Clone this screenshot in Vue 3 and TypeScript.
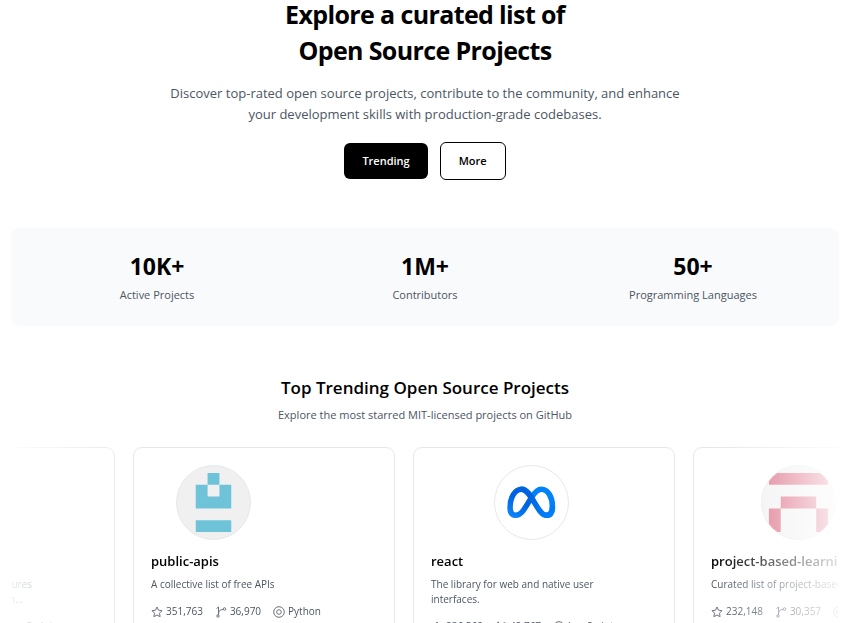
<script setup lang="ts">
interface Stat {
  value: string
  label: string
}

interface Project {
  name: string
  lines: string[]
  stars: string
  forks: string
  language: string
  avatar: 'none' | 'blocks' | 'loop' | 'arch'
  introWidth: number
  alignEnd?: boolean
}

const stats: Stat[] = [
  { value: '10K+', label: 'Active Projects' },
  { value: '1M+', label: 'Contributors' },
  { value: '50+', label: 'Programming Languages' },
]

const projects: Project[] = [
  {
    name: '', lines: ['structures', 'm…'], stars: '', forks: '',
    language: 'JavaScript', avatar: 'none', introWidth: 161, alignEnd: true,
  },
  {
    name: 'public-apis', lines: ['A collective list of free APIs'], stars: '351,763', forks: '36,970',
    language: 'Python', avatar: 'blocks', introWidth: 125,
  },
  {
    name: 'react', lines: ['The library for web and native user', 'interfaces.'], stars: '236,562', forks: '48,767',
    language: 'JavaScript', avatar: 'loop', introWidth: 201,
  },
  {
    name: 'project-based-learning', lines: ['Curated list of project-based tutorials'], stars: '232,148', forks: '30,357',
    language: 'Python', avatar: 'arch', introWidth: 174,
  },
]
</script>

<template>
  <main class="page">
    <section class="hero">
      <h1>Explore a curated list of<br />Open Source Projects</h1>
      <p>Discover top-rated open source projects, contribute to the community, and enhance<br />your development skills with production-grade codebases.</p>
      <div class="actions">
        <button type="button" class="btn btn-solid">Trending</button>
        <button type="button" class="btn btn-outline">More</button>
      </div>
    </section>

    <section class="stats">
      <div v-for="stat in stats" :key="stat.label" class="stat">
        <strong>{{ stat.value }}</strong>
        <span>{{ stat.label }}</span>
      </div>
    </section>

    <section class="trending">
      <h2>Top Trending Open Source Projects</h2>
      <p>Explore the most starred MIT-licensed projects on GitHub</p>
      <div class="carousel">
        <div class="track">
          <article v-for="(project, i) in projects" :key="i" class="card">
            <div class="intro" :class="{ 'intro-end': project.alignEnd }" :style="{ width: project.introWidth + 'px' }">
              <div class="avatar" :class="'avatar-' + project.avatar">
                <svg v-if="project.avatar === 'blocks'" viewBox="0 0 74 74" aria-hidden="true">
                  <path fill="#6fc3d9" d="M31 7h12v12h12v24H19V19h12zM19 55h36v12H19z" />
                  <path fill="#f0f0f0" d="M31 19h12v12H31z" />
                </svg>
                <svg v-else-if="project.avatar === 'loop'" viewBox="0 0 74 74" aria-hidden="true">
                  <defs>
                    <linearGradient id="loop-left" x1="0" y1="1" x2="0.6" y2="0">
                      <stop offset="0" stop-color="#0a85fb" />
                      <stop offset="0.6" stop-color="#0064e0" />
                    </linearGradient>
                    <linearGradient id="loop-right" x1="0" y1="0" x2="1" y2="1">
                      <stop offset="0.3" stop-color="#0064e0" />
                      <stop offset="1" stop-color="#0082fb" />
                    </linearGradient>
                  </defs>
                  <g fill="none" stroke-width="5.600" stroke-linecap="round">
                    <path stroke="#0082fb" d="M37 32C40 27 43 23.500 47 23.500C54 23.500 58.200 32 58.200 41C58.200 47 56 50 52 50" />
                    <path stroke="url(#loop-left)" d="M37 32C30 43 27 50 21 50C17 50 15.300 47 15.300 42C15.300 32 20 23.500 27 23.500C31 23.500 34 27 37 32" />
                    <path stroke="url(#loop-right)" d="M27 23.500C37 23.500 43 50 52 50C56 50 58.200 47 58.200 42" />
                  </g>
                </svg>
                <svg v-else-if="project.avatar === 'arch'" viewBox="0 0 74 74" aria-hidden="true">
                  <path fill="#d9607a" d="M7 7h60v12H7zM19 31h36v12H19zM7 43h12v24H7zM55 43h12v24H55z" />
                </svg>
              </div>
              <h3>{{ project.name }}</h3>
              <p><span v-for="line in project.lines" :key="line">{{ line }}</span></p>
            </div>
            <ul class="meta" :class="{ 'meta-end': project.alignEnd }">
              <li v-if="project.stars">
                <svg viewBox="0 0 12 12" aria-hidden="true">
                  <path d="M6 1l1.500 3.200 3.500.5-2.500 2.500.6 3.500L6 9l-3.100 1.700.6-3.500L1 4.700l3.500-.5z" />
                </svg>
                {{ project.stars }}
              </li>
              <li v-if="project.forks">
                <svg viewBox="0 0 12 12" aria-hidden="true">
                  <path d="M3.500 1v8M3.500 8C3.500 5 5 3.500 8 3.500M1.500 2.500l2-1.500" />
                  <circle cx="3" cy="10" r="1.200" /><circle cx="9.500" cy="3" r="1.300" />
                </svg>
                {{ project.forks }}
              </li>
              <li>
                <svg viewBox="0 0 12 12" aria-hidden="true">
                  <circle cx="6" cy="6" r="5.300" /><circle cx="6" cy="6" r="2.300" />
                </svg>
                {{ project.language }}
              </li>
            </ul>
          </article>
        </div>
      </div>
    </section>
  </main>
</template>

<style>
body {
  background: #fff;
  overflow: hidden;
}
</style>

<style scoped>
* {
  box-sizing: border-box;
  margin: 0;
}

.page {
  padding: 0 13px 0 12px;
  height: 100vh;
  overflow: hidden;
  color: #000;
  font-family: "Open Sans", "Noto Sans", sans-serif;
  font-size: 11px;
  line-height: 18px;
}

.hero {
  display: flex;
  flex-direction: column;
  align-items: center;
  text-align: center;
}

h1 {
  margin-top: -4px;
  font-size: 25px;
  line-height: 36px;
  font-weight: 700;
  letter-spacing: -0.025em;
}

.hero p {
  margin-top: 15px;
  color: #4b5563;
  font-size: 13px;
  line-height: 21px;
}

.actions {
  display: flex;
  align-items: center;
  gap: 12px;
  margin-top: 17px;
}

.btn {
  height: 36px;
  padding: 0 18px;
  border: 0;
  border-radius: 6px;
  font: inherit;
  font-weight: 600;
}

.btn-solid {
  background: #000;
  color: #fff;
}

.btn-outline {
  height: 38px;
  border: 1px solid #000;
  background: #fff;
  color: #000;
}

.stats {
  display: grid;
  grid-template-columns: repeat(3, 1fr);
  margin: 48px -1px 0;
  padding: 24px 12px 22px;
  border-radius: 9px;
  background: #f9fafb;
}

.stat {
  display: flex;
  flex-direction: column;
  align-items: center;
  gap: 6px;
  color: #4b5563;
}

.stat strong {
  color: #000;
  font-size: 23px;
  line-height: 28px;
}

.trending {
  padding-top: 48px;
  text-align: center;
}

h2 {
  font-size: 17px;
  line-height: 27px;
  font-weight: 600;
}

.trending > p {
  margin-top: 5px;
  color: #4b5563;
}

.carousel {
  margin-top: 23px;
  overflow: hidden;
  mask-image: linear-gradient(to right, rgb(0 0 0 / 0.12), #000 15%, #000 85%, rgb(0 0 0 / 0.12));
}

.track {
  display: flex;
  gap: 18px;
  margin-left: -159px;
}

.card {
  flex: 0 0 262px;
  height: 220px;
  padding: 17px;
  border: 1px solid #e5e7eb;
  border-radius: 9px;
  text-align: left;
}

.intro-end {
  text-align: right;
}

.avatar {
  width: 75px;
  height: 75px;
  margin: 0 auto;
  overflow: hidden;
  border: 1px solid #e5e7eb;
  border-radius: 50%;
  background: #f0f0f0;
}

.avatar-none {
  visibility: hidden;
}

.avatar-loop {
  background: #fff;
}

.avatar svg {
  display: block;
}

h3 {
  height: 21px;
  margin-top: 11px;
  font-size: 13px;
  line-height: 21px;
  font-weight: 600;
  white-space: nowrap;
}

.intro p {
  margin-top: 5px;
  color: #4b5563;
  font-size: 10px;
  line-height: 15px;
  white-space: nowrap;
}

.intro p span {
  display: block;
}

.intro-end p span + span {
  padding-right: 9px;
}

.meta {
  display: flex;
  gap: 12px;
  margin-top: 12px;
  padding: 0;
  list-style: none;
  color: #4b5563;
  font-size: 10px;
  line-height: 15px;
}

.meta-end {
  justify-content: flex-end;
  padding-right: 44px;
}

.meta li {
  display: flex;
  align-items: center;
  gap: 3px;
}

.meta svg {
  width: 12px;
  height: 12px;
  fill: none;
  stroke: #6b7280;
  stroke-width: 1;
  stroke-linejoin: round;
}
</style>
